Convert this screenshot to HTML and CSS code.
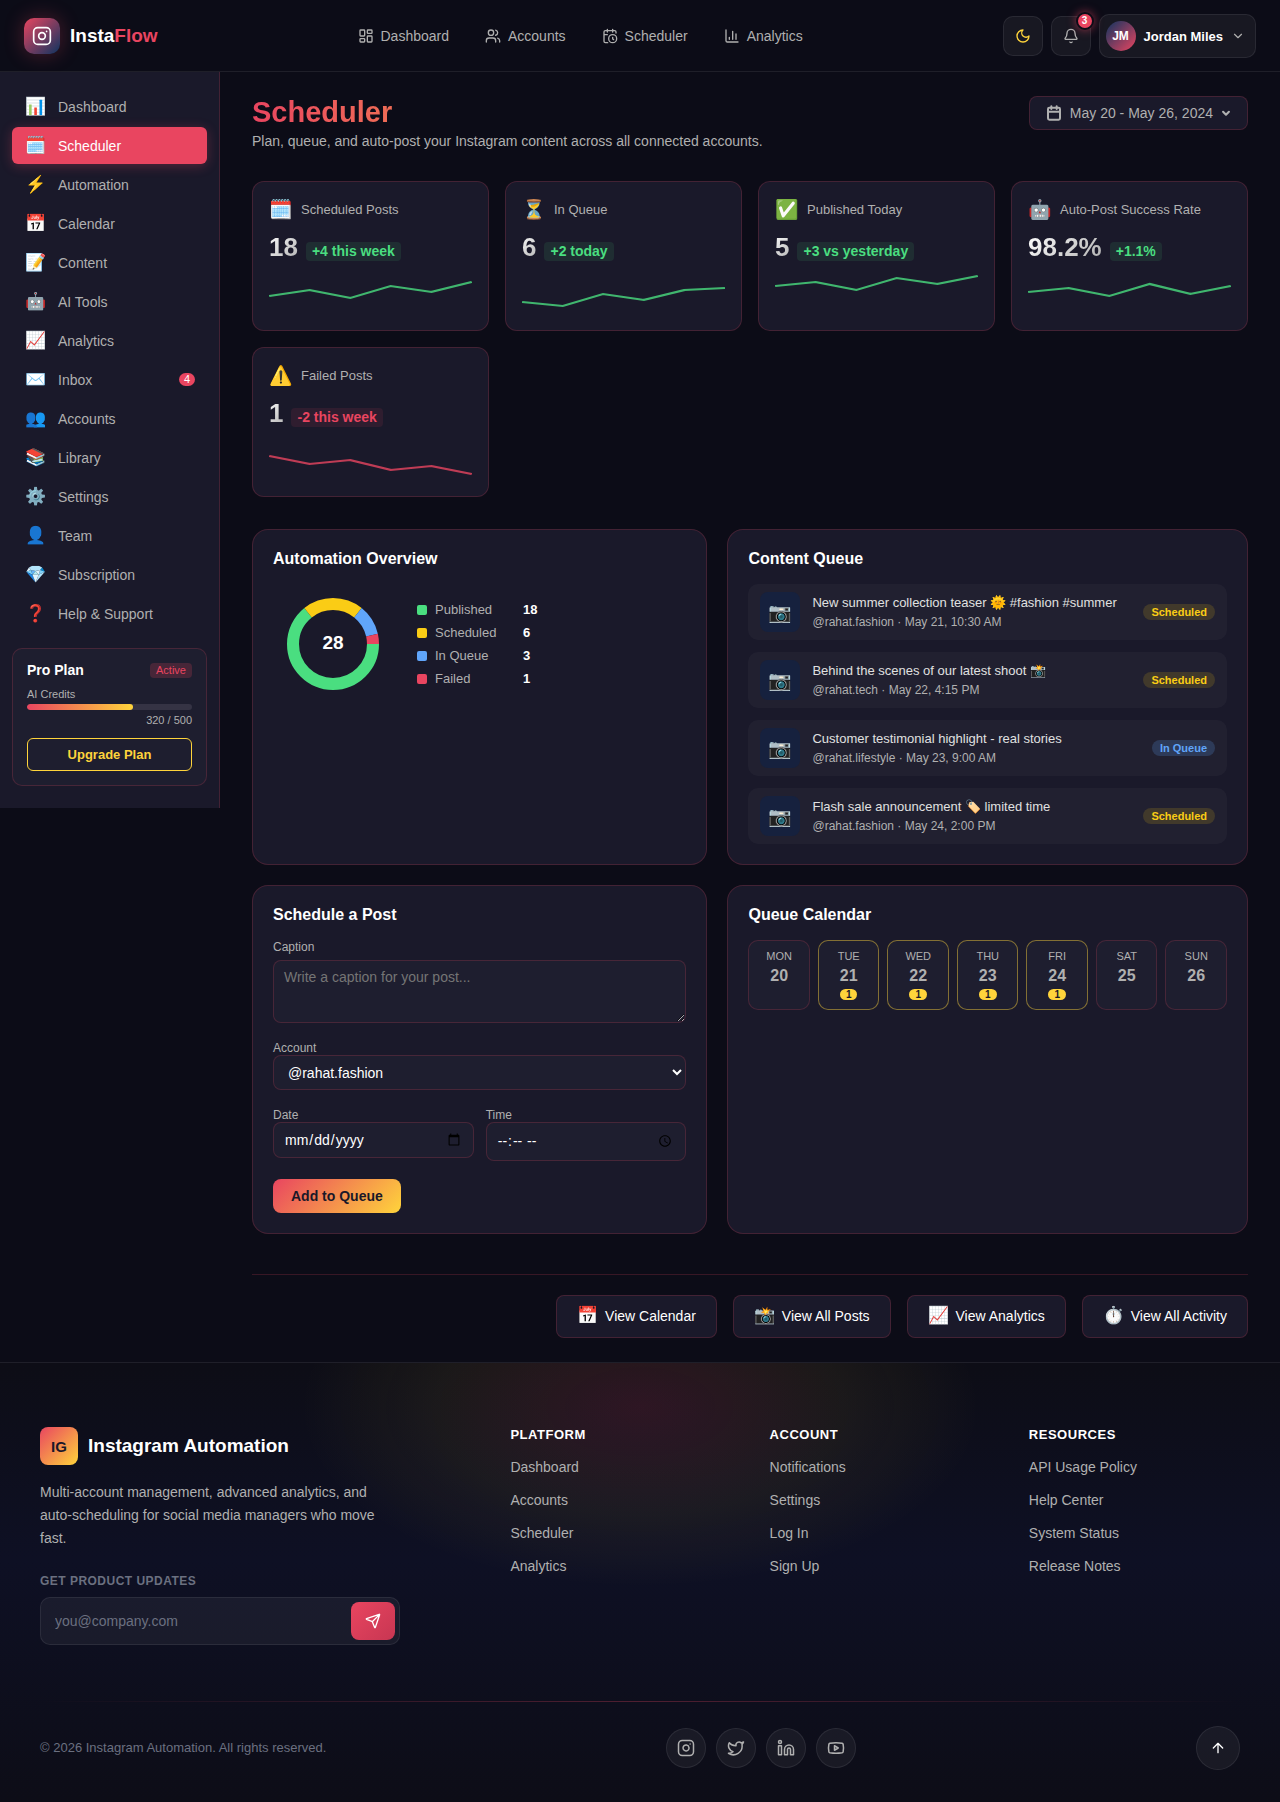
FILE: index.html
```html
<!DOCTYPE html>
<html lang="en">
<head>
    <meta charset="UTF-8">
    <meta name="viewport" content="width=device-width, initial-scale=1">
    <title>Scheduler - InstaFlow</title>
    <link rel="stylesheet" href="styles.css">
</head>
<body>
    <header class="topbar">
        <a class="logo" href="#">
            <span class="logo-mark">
                <svg class="icon icon-lg" viewBox="0 0 24 24"><rect x="2" y="2" width="20" height="20" rx="5"/><circle cx="12" cy="12" r="4"/><path d="M17.5 6.5h.01"/></svg>
            </span>
            <span>Insta<span class="accent">Flow</span></span>
        </a>
        <nav class="topnav">
            <a href="#"><svg class="icon" viewBox="0 0 24 24"><rect x="3" y="3" width="7" height="9" rx="1"/><rect x="14" y="3" width="7" height="5" rx="1"/><rect x="14" y="12" width="7" height="9" rx="1"/><rect x="3" y="16" width="7" height="5" rx="1"/></svg>Dashboard</a>
            <a href="#"><svg class="icon" viewBox="0 0 24 24"><path d="M16 21v-2a4 4 0 0 0-4-4H6a4 4 0 0 0-4 4v2"/><circle cx="9" cy="7" r="4"/><path d="M22 21v-2a4 4 0 0 0-3-3.870M16 3.130a4 4 0 0 1 0 7.750"/></svg>Accounts</a>
            <a href="#"><svg class="icon" viewBox="0 0 24 24"><path d="M21 7.5V6a2 2 0 0 0-2-2H5a2 2 0 0 0-2 2v14a2 2 0 0 0 2 2h3.500M16 2v4M8 2v4M3 10h5M17.500 17.500 16 16.300V14"/><circle cx="16" cy="16" r="6"/></svg>Scheduler</a>
            <a href="#"><svg class="icon" viewBox="0 0 24 24"><path d="M3 3v16a2 2 0 0 0 2 2h16M18 17V9M13 17V5M8 17v-3"/></svg>Analytics</a>
        </nav>
        <div class="top-actions">
            <button class="icon-btn gold" aria-label="Toggle theme"><svg class="icon" viewBox="0 0 24 24"><path d="M12 3a6 6 0 0 0 9 9 9 9 0 1 1-9-9"/></svg></button>
            <button class="icon-btn" aria-label="Notifications"><svg class="icon" viewBox="0 0 24 24"><path d="M10.300 21a2 2 0 0 0 3.400 0M3.300 15.300A1 1 0 0 0 4 17h16a1 1 0 0 0 .74-1.670C19.400 13.960 18 12.500 18 8A6 6 0 0 0 6 8c0 4.500-1.400 5.960-2.700 7.300"/></svg><span class="notif-count">3</span></button>
            <button class="user-btn">
                <span class="avatar">JM</span>
                <span>Jordan Miles</span>
                <svg class="icon icon-sm" viewBox="0 0 24 24"><path d="m6 9 6 6 6-6"/></svg>
            </button>
        </div>
    </header>

    <div class="layout">
        <aside class="sidebar">
            <nav class="side-nav">
                <a href="#"><span class="emoji">📊</span>Dashboard</a>
                <a href="#" class="active"><span class="emoji">🗓️</span>Scheduler</a>
                <a href="#"><span class="emoji">⚡</span>Automation</a>
                <a href="#"><span class="emoji">📅</span>Calendar</a>
                <a href="#"><span class="emoji">📝</span>Content</a>
                <a href="#"><span class="emoji">🤖</span>AI Tools</a>
                <a href="#"><span class="emoji">📈</span>Analytics</a>
                <a href="#"><span class="emoji">✉️</span>Inbox<span class="count">4</span></a>
                <a href="#"><span class="emoji">👥</span>Accounts</a>
                <a href="#"><span class="emoji">📚</span>Library</a>
                <a href="#"><span class="emoji">⚙️</span>Settings</a>
                <a href="#"><span class="emoji">👤</span>Team</a>
                <a href="#"><span class="emoji">💎</span>Subscription</a>
                <a href="#"><span class="emoji">❓</span>Help &amp; Support</a>
            </nav>
            <div class="plan-card">
                <div class="plan-head"><strong>Pro Plan</strong><span class="plan-tag">Active</span></div>
                <div class="plan-label">AI Credits</div>
                <div class="bar"><div class="bar-fill" style="width: 64%"></div></div>
                <div class="plan-usage">320 / 500</div>
                <button class="upgrade-btn">Upgrade Plan</button>
            </div>
        </aside>

        <main class="content">
            <div class="page-head">
                <div>
                    <h1>Scheduler</h1>
                    <p>Plan, queue, and auto-post your Instagram content across all connected accounts.</p>
                </div>
                <button class="date-btn">
                    <svg class="icon icon-bold" viewBox="0 0 24 24"><rect x="3" y="4" width="18" height="18" rx="2"/><path d="M16 2v4M8 2v4M3 10h18"/></svg>
                    May 20 - May 26, 2024
                    <svg class="icon icon-caret" viewBox="0 0 24 24"><path d="m5 9 7 7 7-7"/></svg>
                </button>
            </div>

            <section class="stats">
                <div class="stat">
                    <div class="stat-head"><span class="stat-emoji">🗓️</span>Scheduled Posts</div>
                    <div class="stat-row"><span class="stat-value">18</span><span class="delta up">+4 this week</span></div>
                    <svg class="spark up" viewBox="0 0 100 40" preserveAspectRatio="none"><polyline points="0,22 20,16 40,24 60,12 80,18 100,8"/></svg>
                </div>
                <div class="stat">
                    <div class="stat-head"><span class="stat-emoji">⏳</span>In Queue</div>
                    <div class="stat-row"><span class="stat-value">6</span><span class="delta up">+2 today</span></div>
                    <svg class="spark up" viewBox="0 0 100 40" preserveAspectRatio="none"><polyline points="0,28 20,32 40,20 60,26 80,16 100,14"/></svg>
                </div>
                <div class="stat">
                    <div class="stat-head"><span class="stat-emoji">✅</span>Published Today</div>
                    <div class="stat-row"><span class="stat-value">5</span><span class="delta up">+3 vs yesterday</span></div>
                    <svg class="spark up" viewBox="0 0 100 40" preserveAspectRatio="none"><polyline points="0,12 20,8 40,16 60,4 80,10 100,2"/></svg>
                </div>
                <div class="stat">
                    <div class="stat-head"><span class="stat-emoji">🤖</span>Auto-Post Success Rate</div>
                    <div class="stat-row"><span class="stat-value">98.2%</span><span class="delta up">+1.1%</span></div>
                    <svg class="spark up" viewBox="0 0 100 40" preserveAspectRatio="none"><polyline points="0,18 20,14 40,22 60,10 80,20 100,12"/></svg>
                </div>
                <div class="stat">
                    <div class="stat-head"><span class="stat-emoji">⚠️</span>Failed Posts</div>
                    <div class="stat-row"><span class="stat-value">1</span><span class="delta down">-2 this week</span></div>
                    <svg class="spark down" viewBox="0 0 100 40" preserveAspectRatio="none"><polyline points="0,16 20,24 40,20 60,30 80,26 100,34"/></svg>
                </div>
            </section>

            <div class="panels">
                <section class="panel">
                    <h2>Automation Overview</h2>
                    <div class="overview">
                        <svg class="donut" viewBox="0 0 120 120">
                            <circle class="seg green" cx="60" cy="60" r="40" pathLength="28" stroke-dasharray="18 10"/>
                            <circle class="seg yellow" cx="60" cy="60" r="40" pathLength="28" stroke-dasharray="6 22" stroke-dashoffset="-18"/>
                            <circle class="seg blue" cx="60" cy="60" r="40" pathLength="28" stroke-dasharray="3 25" stroke-dashoffset="-24"/>
                            <circle class="seg red" cx="60" cy="60" r="40" pathLength="28" stroke-dasharray="1 27" stroke-dashoffset="-27"/>
                            <text x="60" y="65">28</text>
                        </svg>
                        <ul class="legend">
                            <li><span class="dot green"></span><span class="legend-name">Published</span><strong>18</strong></li>
                            <li><span class="dot yellow"></span><span class="legend-name">Scheduled</span><strong>6</strong></li>
                            <li><span class="dot blue"></span><span class="legend-name">In Queue</span><strong>3</strong></li>
                            <li><span class="dot red"></span><span class="legend-name">Failed</span><strong>1</strong></li>
                        </ul>
                    </div>
                </section>

                <section class="panel">
                    <h2>Content Queue</h2>
                    <ul class="queue">
                        <li>
                            <span class="thumb">📷</span>
                            <div class="queue-text"><div class="queue-title">New summer collection teaser 🌞 #fashion #summer</div><div class="queue-meta">@rahat.fashion · May 21, 10:30 AM</div></div>
                            <span class="status scheduled">Scheduled</span>
                        </li>
                        <li>
                            <span class="thumb">📷</span>
                            <div class="queue-text"><div class="queue-title">Behind the scenes of our latest shoot 📸</div><div class="queue-meta">@rahat.tech · May 22, 4:15 PM</div></div>
                            <span class="status scheduled">Scheduled</span>
                        </li>
                        <li>
                            <span class="thumb">📷</span>
                            <div class="queue-text"><div class="queue-title">Customer testimonial highlight - real stories</div><div class="queue-meta">@rahat.lifestyle · May 23, 9:00 AM</div></div>
                            <span class="status queued">In Queue</span>
                        </li>
                        <li>
                            <span class="thumb">📷</span>
                            <div class="queue-text"><div class="queue-title">Flash sale announcement 🏷️ limited time</div><div class="queue-meta">@rahat.fashion · May 24, 2:00 PM</div></div>
                            <span class="status scheduled">Scheduled</span>
                        </li>
                    </ul>
                </section>

                <section class="panel">
                    <h2>Schedule a Post</h2>
                    <form class="post-form">
                        <div class="field field-caption">
                            <label for="caption">Caption</label>
                            <textarea id="caption" placeholder="Write a caption for your post..."></textarea>
                        </div>
                        <div class="field">
                            <label for="account">Account</label>
                            <select id="account">
                                <option>@rahat.fashion</option>
                                <option>@rahat.tech</option>
                                <option>@rahat.lifestyle</option>
                            </select>
                        </div>
                        <div class="field-row">
                            <div class="field">
                                <label for="date">Date</label>
                                <input type="date" id="date">
                            </div>
                            <div class="field">
                                <label for="time">Time</label>
                                <input type="time" id="time">
                            </div>
                        </div>
                        <button type="button" class="add-btn">Add to Queue</button>
                    </form>
                </section>

                <section class="panel">
                    <h2>Queue Calendar</h2>
                    <div class="week">
                        <div class="day"><span class="day-name">Mon</span><span class="day-num">20</span></div>
                        <div class="day has-posts"><span class="day-name">Tue</span><span class="day-num">21</span><span class="day-count">1</span></div>
                        <div class="day has-posts"><span class="day-name">Wed</span><span class="day-num">22</span><span class="day-count">1</span></div>
                        <div class="day has-posts"><span class="day-name">Thu</span><span class="day-num">23</span><span class="day-count">1</span></div>
                        <div class="day has-posts"><span class="day-name">Fri</span><span class="day-num">24</span><span class="day-count">1</span></div>
                        <div class="day"><span class="day-name">Sat</span><span class="day-num">25</span></div>
                        <div class="day"><span class="day-name">Sun</span><span class="day-num">26</span></div>
                    </div>
                </section>
            </div>

            <div class="quick-links">
                <a href="#"><span class="emoji">📅</span>View Calendar</a>
                <a href="#"><span class="emoji">📸</span>View All Posts</a>
                <a href="#"><span class="emoji">📈</span>View Analytics</a>
                <a href="#"><span class="emoji">⏱️</span>View All Activity</a>
            </div>
        </main>
    </div>

    <footer class="footer">
        <div class="footer-grid">
            <div>
                <div class="footer-brand"><span class="footer-mark">IG</span>Instagram Automation</div>
                <p class="footer-desc">Multi-account management, advanced analytics, and auto-scheduling for social media managers who move fast.</p>
                <form class="newsletter">
                    <label for="email">Get product updates</label>
                    <div class="newsletter-box">
                        <input type="email" id="email" placeholder="you@company.com">
                        <button type="button" aria-label="Subscribe"><svg class="icon" viewBox="0 0 24 24"><path d="M14.500 21.700a.5.5 0 0 0 .94 0l6.500-19a.5.5 0 0 0-.64-.64l-19 6.500a.5.5 0 0 0 0 .94l7.900 3.200a2 2 0 0 1 1.100 1.100zM21.900 2.100 10.900 13.100"/></svg></button>
                    </div>
                </form>
            </div>
            <nav class="footer-col">
                <h3>Platform</h3>
                <a href="#">Dashboard</a>
                <a href="#">Accounts</a>
                <a href="#">Scheduler</a>
                <a href="#">Analytics</a>
            </nav>
            <nav class="footer-col">
                <h3>Account</h3>
                <a href="#">Notifications</a>
                <a href="#">Settings</a>
                <a href="#">Log In</a>
                <a href="#">Sign Up</a>
            </nav>
            <nav class="footer-col">
                <h3>Resources</h3>
                <a href="#">API Usage Policy</a>
                <a href="#">Help Center</a>
                <a href="#">System Status</a>
                <a href="#">Release Notes</a>
            </nav>
        </div>
        <div class="footer-line"></div>
        <div class="footer-bottom">
            <span>© 2026 Instagram Automation. All rights reserved.</span>
            <div class="socials">
                <a href="#" aria-label="Instagram"><svg class="icon icon-md" viewBox="0 0 24 24"><rect x="2" y="2" width="20" height="20" rx="5"/><path d="M16 11.370A4 4 0 1 1 12.630 8 4 4 0 0 1 16 11.370zM17.500 6.500h.01"/></svg></a>
                <a href="#" aria-label="Twitter"><svg class="icon icon-md" viewBox="0 0 24 24"><path d="M22 4s-.7 2.100-2 3.400c1.600 10-9.400 17.300-18 11.600 2.200.1 4.400-.6 6-2C3 15.500.5 9.600 3 5c2.200 2.600 5.600 4.100 9 4-.9-4.200 4-6.600 7-3.800 1.100 0 3-1.200 3-1.200z"/></svg></a>
                <a href="#" aria-label="LinkedIn"><svg class="icon icon-md" viewBox="0 0 24 24"><path d="M16 8a6 6 0 0 1 6 6v7h-4v-7a2 2 0 0 0-4 0v7h-4v-7a6 6 0 0 1 6-6z"/><rect x="2" y="9" width="4" height="12"/><circle cx="4" cy="4" r="2"/></svg></a>
                <a href="#" aria-label="YouTube"><svg class="icon icon-md" viewBox="0 0 24 24"><path d="M2.500 17a24 24 0 0 1 0-10 2 2 0 0 1 1.400-1.400 50 50 0 0 1 16.200 0A2 2 0 0 1 21.500 7a24 24 0 0 1 0 10 2 2 0 0 1-1.400 1.400 50 50 0 0 1-16.200 0A2 2 0 0 1 2.500 17zM10 15l5-3-5-3z"/></svg></a>
            </div>
            <button class="to-top" aria-label="Back to top"><svg class="icon" viewBox="0 0 24 24"><path d="m5 12 7-7 7 7M12 19V5"/></svg></button>
        </div>
    </footer>
</body>
</html>
```
FILE: styles.css
```css
:root {
    --bg: #0c0c17;
    --card: #1a192a;
    --field: #1e1e2f;
    --accent: #e94560;
    --gold: #ffd43b;
    --green: #4ade80;
    --yellow: #facc15;
    --blue: #60a5fa;
    --muted: #b0b0b0;
    --line: rgba(233, 69, 96, 0.2);
    --soft-line: rgba(255, 255, 255, 0.08);
}

* {
    box-sizing: border-box;
}

body {
    margin: 0;
    font-family: "Liberation Sans", Arial, sans-serif;
    font-size: 14px;
    background: var(--bg);
    color: #fff;
}

h1, h2, h3, p, ul {
    margin: 0;
    padding: 0;
}

ul {
    list-style: none;
}

a {
    color: inherit;
    text-decoration: none;
}

button, input, select, textarea {
    font-family: inherit;
    font-size: 14px;
    color: inherit;
}

button {
    padding: 0;
    border: none;
    cursor: pointer;
}

.icon {
    width: 16px;
    height: 16px;
    flex-shrink: 0;
    fill: none;
    stroke: currentColor;
    stroke-width: 2;
    stroke-linecap: round;
    stroke-linejoin: round;
}

.icon-lg {
    width: 20px;
    height: 20px;
}

.icon-md {
    width: 18px;
    height: 18px;
}

.icon-sm {
    width: 14px;
    height: 14px;
}

.icon-bold {
    stroke-width: 3;
}

.icon-caret {
    width: 10px;
    height: 10px;
    stroke-width: 5;
}

.emoji {
    width: 20px;
    font-size: 17px;
    line-height: 20px;
}

/* Top bar */
.topbar {
    display: flex;
    align-items: center;
    justify-content: space-between;
    padding: 14px 24px 13px;
    border-bottom: 1px solid var(--soft-line);
}

.logo {
    display: flex;
    align-items: center;
    gap: 10px;
    font-size: 19px;
    font-weight: bold;
}

.logo-mark {
    display: flex;
    align-items: center;
    justify-content: center;
    width: 36px;
    height: 36px;
    border-radius: 10px;
    background: linear-gradient(135deg, var(--accent), #0f3460);
    box-shadow: 0 0 20px rgba(233, 69, 96, 0.3);
}

.accent {
    color: var(--accent);
}

.topnav {
    display: flex;
    gap: 36px;
    color: var(--muted);
}

.topnav a {
    display: flex;
    align-items: center;
    gap: 7px;
}

.top-actions {
    display: flex;
    align-items: center;
    gap: 8px;
}

.icon-btn {
    position: relative;
    display: flex;
    align-items: center;
    justify-content: center;
    width: 40px;
    height: 40px;
    border: 1px solid var(--soft-line);
    border-radius: 10px;
    background: rgba(255, 255, 255, 0.05);
    color: var(--muted);
}

.icon-btn.gold {
    color: var(--gold);
}

.notif-count {
    position: absolute;
    top: -5px;
    right: -4px;
    width: 18px;
    height: 18px;
    border: 2px solid var(--bg);
    border-radius: 50%;
    background: var(--accent);
    box-shadow: 0 0 10px rgba(233, 69, 96, 0.6);
    color: #fff;
    font-size: 10px;
    font-weight: bold;
    line-height: 14px;
}

.user-btn {
    display: flex;
    align-items: center;
    gap: 8px;
    height: 44px;
    padding: 0 10px 0 6px;
    border: 1px solid var(--soft-line);
    border-radius: 10px;
    background: rgba(255, 255, 255, 0.05);
    font-size: 13px;
    font-weight: bold;
}

.user-btn .icon {
    color: var(--muted);
}

.avatar {
    width: 30px;
    height: 30px;
    border-radius: 50%;
    background: linear-gradient(135deg, #0f3460, var(--accent));
    font-size: 12px;
    line-height: 30px;
}

/* Sidebar */
.layout {
    display: flex;
    align-items: flex-start;
}

.sidebar {
    flex: 0 0 220px;
    padding: 16px 12px 22px;
    border-right: 1px solid var(--line);
    background: var(--card);
}

.side-nav {
    display: flex;
    flex-direction: column;
    gap: 2px;
}

.side-nav a {
    display: flex;
    align-items: center;
    height: 37px;
    gap: 13px;
    padding: 0 12px 0 13px;
    border-radius: 6px;
    color: var(--muted);
}

.side-nav a.active {
    background: var(--accent);
    box-shadow: 0 2px 12px rgba(233, 69, 96, 0.3);
    color: #fff;
}

.count {
    width: 16px;
    margin-left: auto;
    border-radius: 10px;
    background: var(--accent);
    color: #fff;
    font-size: 11px;
    line-height: 13px;
    text-align: center;
}

.plan-card {
    margin-top: 16px;
    padding: 14px;
    border: 1px solid var(--line);
    border-radius: 10px;
    background: var(--field);
    color: var(--muted);
    font-size: 11px;
    line-height: 13px;
}

.plan-head {
    display: flex;
    align-items: center;
    justify-content: space-between;
    margin-bottom: 10px;
}

.plan-head strong {
    color: #fff;
    font-size: 14px;
}

.plan-tag {
    padding: 1px 6px;
    border-radius: 4px;
    background: rgba(233, 69, 96, 0.2);
    color: var(--accent);
}

.bar {
    height: 6px;
    margin: 3px 0 4px;
    border-radius: 3px;
    background: #353344;
    overflow: hidden;
}

.bar-fill {
    height: 100%;
    border-radius: 3px;
    background: linear-gradient(90deg, var(--accent), var(--gold));
}

.plan-usage {
    text-align: right;
}

.upgrade-btn {
    width: 100%;
    height: 33px;
    margin-top: 11px;
    border: 1px solid var(--gold);
    border-radius: 6px;
    background: none;
    color: var(--gold);
    font-size: 13px;
    font-weight: bold;
}

/* Main content */
.content {
    flex: 1;
    min-width: 0;
    padding: 24px 32px;
}

.page-head {
    display: flex;
    align-items: flex-start;
    justify-content: space-between;
    margin-bottom: 32px;
}

.page-head h1 {
    font-size: 29px;
    line-height: 33px;
    background: linear-gradient(90deg, var(--accent), var(--gold));
    background-clip: text;
    -webkit-background-clip: text;
    color: transparent;
}

.page-head p {
    margin-top: 4px;
    color: var(--muted);
    line-height: 16px;
}

.date-btn {
    display: flex;
    align-items: center;
    gap: 8px;
    height: 34px;
    padding: 0 16px;
    border: 1px solid var(--line);
    border-radius: 8px;
    background: var(--card);
    color: var(--muted);
}

.stats {
    display: grid;
    grid-template-columns: repeat(auto-fill, minmax(200px, 1fr));
    gap: 16px;
}

.stat {
    padding: 16px;
    border: 1px solid var(--line);
    border-radius: 12px;
    background: var(--card);
}

.stat-head {
    display: flex;
    align-items: center;
    gap: 8px;
    color: var(--muted);
    font-size: 13px;
    line-height: 24px;
}

.stat-emoji {
    width: 24px;
    font-size: 19px;
    text-align: center;
}

.stat-row {
    display: flex;
    align-items: baseline;
    gap: 8px;
    margin: 10px 0 12px;
}

.stat-value {
    font-size: 26px;
    font-weight: bold;
    line-height: 30px;
    background: linear-gradient(135deg, #fff, #b0b0b0);
    background-clip: text;
    -webkit-background-clip: text;
    color: transparent;
}

.delta {
    padding: 2px 6px;
    border-radius: 4px;
    font-weight: bold;
    line-height: 15px;
}

.delta.up {
    background: rgba(74, 222, 128, 0.1);
    color: var(--green);
}

.delta.down {
    background: rgba(233, 69, 96, 0.1);
    color: var(--accent);
}

.spark {
    display: block;
    width: 100%;
    height: 40px;
    fill: none;
    stroke-width: 2;
    opacity: 0.8;
}

.spark.up {
    stroke: var(--green);
}

.spark.down {
    stroke: var(--accent);
}

/* Panels */
.panels {
    display: grid;
    grid-template-columns: 7fr 8fr;
    gap: 20px;
    margin-top: 32px;
}

.panel {
    padding: 20px;
    border: 1px solid var(--line);
    border-radius: 16px;
    background: var(--card);
}

.panel h2 {
    margin-bottom: 16px;
    font-size: 16px;
    line-height: 18px;
}

.overview {
    display: flex;
    align-items: center;
    gap: 24px;
}

.donut {
    width: 120px;
    height: 120px;
}

.seg {
    fill: none;
    stroke-width: 12;
}

.seg.green { stroke: var(--green); }
.seg.yellow { stroke: var(--yellow); }
.seg.blue { stroke: var(--blue); }
.seg.red { stroke: var(--accent); }

.donut text {
    fill: #fff;
    font-size: 19px;
    font-weight: bold;
    text-anchor: middle;
}

.legend {
    display: flex;
    flex-direction: column;
    gap: 8px;
    font-size: 13px;
    line-height: 15px;
}

.legend li {
    display: flex;
    align-items: center;
    gap: 8px;
}

.legend-name {
    width: 80px;
    color: var(--muted);
}

.dot {
    width: 10px;
    height: 10px;
    border-radius: 2px;
}

.dot.green { background: var(--green); }
.dot.yellow { background: var(--yellow); }
.dot.blue { background: var(--blue); }
.dot.red { background: var(--accent); }

.queue {
    display: flex;
    flex-direction: column;
    gap: 12px;
}

.queue li {
    display: flex;
    align-items: center;
    gap: 12px;
    padding: 8px 12px;
    border-radius: 10px;
    background: rgba(255, 255, 255, 0.03);
}

.thumb {
    width: 40px;
    height: 40px;
    border-radius: 8px;
    background: #16213e;
    font-size: 19px;
    line-height: 42px;
    text-align: center;
}

.queue-text {
    flex: 1;
    min-width: 0;
}

.queue-title {
    overflow: hidden;
    color: #e0e0e0;
    font-size: 13px;
    line-height: 16px;
    text-overflow: ellipsis;
    white-space: nowrap;
}

.queue-meta {
    margin-top: 4px;
    color: var(--muted);
    font-size: 12px;
    line-height: 14px;
}

.status {
    padding: 0 8px;
    border-radius: 8px;
    font-size: 11px;
    font-weight: bold;
    line-height: 16px;
}

.status.scheduled {
    background: rgba(250, 204, 21, 0.15);
    color: var(--yellow);
}

.status.queued {
    background: rgba(96, 165, 250, 0.2);
    color: var(--blue);
}

/* Schedule form */
.post-form {
    display: flex;
    flex-direction: column;
    gap: 18px;
}

.field {
    display: flex;
    flex-direction: column;
    flex: 1;
}

.field label {
    color: var(--muted);
    font-size: 12px;
    line-height: 14px;
}

.field-caption {
    gap: 6px;
}

.field textarea,
.field select,
.field input {
    width: 100%;
    padding: 8px 10px;
    border: 1px solid var(--line);
    border-radius: 8px;
    background: var(--field);
}

.field textarea {
    display: block;
    height: 63px;
    resize: vertical;
}

.field select {
    height: 35px;
}

.field textarea::placeholder {
    color: #757575;
}

.field-row {
    display: flex;
    align-items: flex-start;
    gap: 12px;
}

.add-btn {
    align-self: flex-start;
    height: 34px;
    padding: 0 18px;
    border-radius: 8px;
    background: linear-gradient(135deg, var(--accent), var(--gold));
    color: #1a1829;
    font-weight: bold;
}

/* Calendar */
.week {
    display: grid;
    grid-template-columns: repeat(7, 1fr);
    gap: 8px;
}

.day {
    display: flex;
    flex-direction: column;
    align-items: center;
    gap: 4px;
    height: 70px;
    padding: 8px 4px;
    border: 1px solid var(--line);
    border-radius: 10px;
    background: var(--field);
    color: var(--muted);
}

.day.has-posts {
    border-color: rgba(255, 212, 59, 0.45);
}

.day-name {
    font-size: 11px;
    line-height: 14px;
    text-transform: uppercase;
}

.day-num {
    font-size: 16px;
    font-weight: bold;
    line-height: 18px;
}

.day-count {
    padding: 0 6px;
    border-radius: 8px;
    background: var(--gold);
    color: #1a1829;
    font-size: 10px;
    font-weight: bold;
    line-height: 11px;
}

.quick-links {
    display: flex;
    justify-content: flex-end;
    gap: 16px;
    margin-top: 40px;
    padding-top: 20px;
    border-top: 1px solid var(--line);
}

.quick-links a {
    display: flex;
    align-items: center;
    gap: 8px;
    height: 43px;
    padding: 0 20px;
    border: 1px solid var(--line);
    border-radius: 8px;
    background: var(--card);
}

/* Footer */
.footer {
    padding: 64px 40px 32px;
    border-top: 1px solid var(--soft-line);
    background:
        radial-gradient(340px 180px at 50% 44px, rgba(233, 69, 96, 0.15), rgba(255, 212, 59, 0.06) 60%, transparent),
        linear-gradient(180deg, #0d0d16, #0e1024 45%, #0d0d17);
}

.footer-grid {
    display: grid;
    grid-template-columns: 2fr 1fr 1fr 1fr;
    gap: 48px;
}

.footer-brand {
    display: flex;
    align-items: center;
    gap: 10px;
    font-size: 19px;
    font-weight: bold;
}

.footer-mark {
    width: 38px;
    height: 38px;
    border-radius: 8px;
    background: linear-gradient(135deg, var(--accent), var(--gold));
    color: #1a1829;
    font-size: 15px;
    line-height: 39px;
    text-align: center;
}

.footer-desc {
    max-width: 340px;
    margin: 16px 0 24px;
    color: var(--muted);
    line-height: 23px;
}

.newsletter label {
    display: block;
    margin-bottom: 8px;
    color: #6b7080;
    font-size: 12px;
    font-weight: bold;
    letter-spacing: 0.04em;
    line-height: 15px;
    text-transform: uppercase;
}

.newsletter-box {
    display: flex;
    max-width: 360px;
    padding: 4px;
    border: 1px solid var(--soft-line);
    border-radius: 10px;
    background: rgba(255, 255, 255, 0.05);
}

.newsletter-box input {
    flex: 1;
    min-width: 0;
    padding: 0 10px;
    border: none;
    background: none;
}

.newsletter-box input::placeholder {
    color: #6b7080;
}

.newsletter-box button {
    display: flex;
    align-items: center;
    justify-content: center;
    width: 44px;
    height: 38px;
    border-radius: 8px;
    background: linear-gradient(135deg, var(--accent), #c73652);
}

.footer-col {
    display: flex;
    flex-direction: column;
    align-items: flex-start;
    gap: 17px;
    color: var(--muted);
    line-height: 16px;
}

.footer-col h3 {
    color: #fff;
    font-size: 13px;
    letter-spacing: 0.04em;
    line-height: 15px;
    text-transform: uppercase;
}

.footer-line {
    height: 1px;
    margin: 56px 0 24px;
    background: linear-gradient(90deg, transparent, rgba(233, 69, 96, 0.3), transparent);
}

.footer-bottom {
    display: flex;
    align-items: center;
    justify-content: space-between;
    color: #6b7080;
    font-size: 13px;
}

.socials {
    display: flex;
    gap: 10px;
}

.socials a,
.to-top {
    display: flex;
    align-items: center;
    justify-content: center;
    width: 40px;
    height: 40px;
    border: 1px solid var(--soft-line);
    border-radius: 50%;
    background: rgba(255, 255, 255, 0.05);
    color: var(--muted);
}

.to-top {
    width: 44px;
    height: 44px;
    color: #fff;
}
```
